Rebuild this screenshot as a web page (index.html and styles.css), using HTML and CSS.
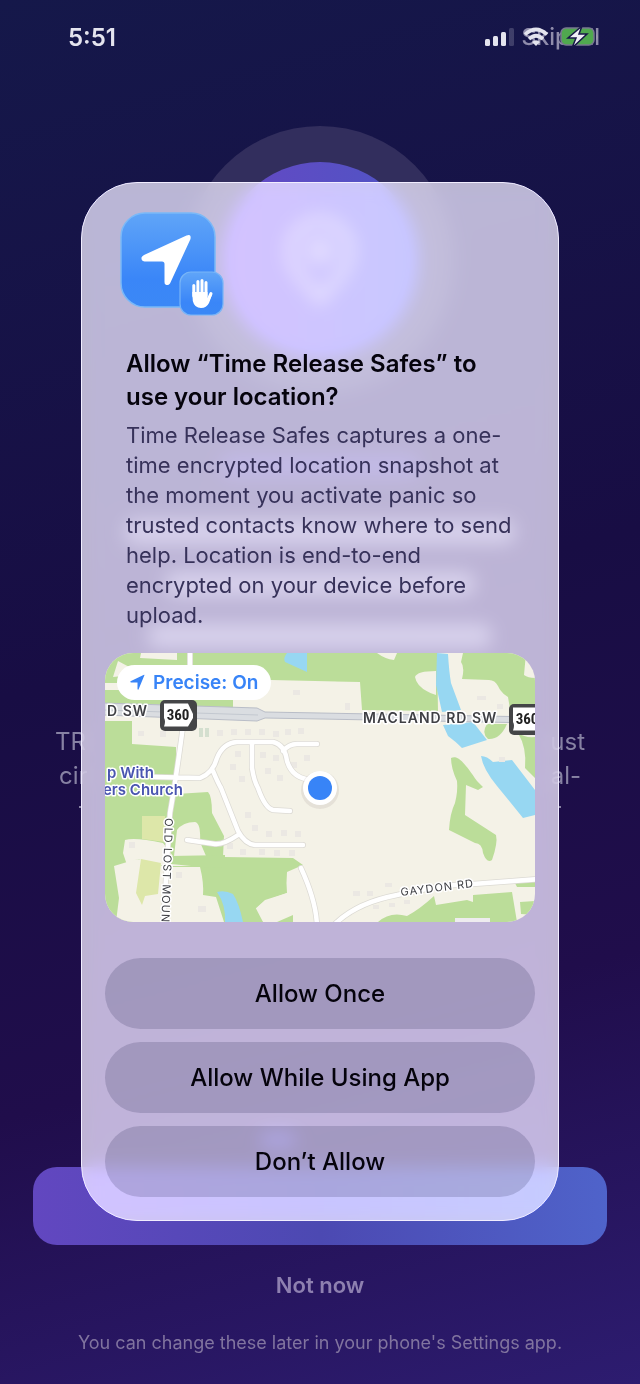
FILE: index.html
```html
<!DOCTYPE html>
<html lang="en">
<head>
<meta charset="utf-8">
<meta name="viewport" content="width=device-width, initial-scale=1">
<title>Location permission</title>
<link rel="stylesheet" href="styles.css">
</head>
<body>
<div class="screen">
  <header class="topbar">
    <time class="clock">5:51</time>
    <button class="skip" type="button">Skip all</button>
    <svg class="status" width="116" height="24" viewBox="0 0 116 24" aria-hidden="true">
      <g fill="#e4e4ee">
        <rect x="1" y="14" width="5" height="7" rx="1.5"/>
        <rect x="9" y="11" width="5" height="10" rx="1.5"/>
        <rect x="17" y="7" width="5" height="14" rx="1.5"/>
        <rect x="25" y="3" width="5" height="18" rx="1.5" opacity=".2"/>
      </g>
      <g fill="none" stroke="#e4e4ee" stroke-width="3.6">
        <path d="M41 9.5Q52 -.5 63 9.5"/>
        <path d="M45 14Q52 7.5 59 14"/>
      </g>
      <path d="M48 17Q52 13.5 56 17L52 21Z" fill="#e4e4ee"/>
      <rect x="77" y="3" width="33" height="17" rx="5" fill="#50a84f" stroke="#77788f" stroke-width="1.5"/>
      <path d="M112 9q4 3 0 6z" fill="#9998ac"/>
      <path d="M98 1L84 13h8l-4 10 15-14h-8z" fill="#efeff5" stroke="#171748" stroke-width="1.5"/>
    </svg>
  </header>
  <main class="page">
    <div class="halo">
      <div class="orb">
        <svg width="76" height="90" viewBox="0 0 80 96" fill="none" stroke="#fff" stroke-opacity=".6" stroke-width="9" aria-hidden="true">
          <path d="M40 90C28 74 8 60 8 38a32 32 0 0 1 64 0C72 60 52 74 40 90Z"/>
          <circle cx="40" cy="38" r="10"/>
        </svg>
      </div>
    </div>
    <div class="glow" aria-hidden="true"></div>
    <div class="headline" aria-hidden="true"><i></i><i></i><i></i></div>
    <div class="summary">
      <p class="line"><span>TR</span><span>ust</span></p>
      <p class="line line-inset"><span>cir</span><span>al-</span></p>
      <p class="ticks" aria-hidden="true"><i></i><i></i></p>
    </div>
    <div class="dots" aria-hidden="true"><i></i></div>
    <button class="cta" type="button" aria-label="Continue"></button>
    <button class="later" type="button">Not now</button>
    <p class="note">You can change these later in your phone's Settings app.</p>
  </main>

  <section class="dialog" role="dialog" aria-labelledby="dialog-title">
    <svg class="app-icon" width="104" height="104" viewBox="0 0 104 104" aria-hidden="true">
      <defs>
        <linearGradient id="blue" x1="0" y1="0" x2="0" y2="1">
          <stop offset="0" stop-color="#60a5f8"/><stop offset=".7" stop-color="#3a86f8"/><stop offset="1" stop-color="#3b88f6"/>
        </linearGradient>
      </defs>
      <rect x="1" y="1" width="94" height="94" rx="24" fill="url(#blue)" stroke="#7ab9f8" stroke-width="1.5"/>
      <path d="M66.500 23.500Q71.500 21.500 70.500 27L50 71.500Q48 74 45.500 72.500Q44.500 72 44.500 70V52Q44.500 49.500 42 49.500H24.500Q21 49 21.500 45.500Q21.500 44.500 24 43Z" fill="#fff"/>
      <rect x="60" y="60" width="43" height="43" rx="11" fill="url(#blue)" stroke="#78b5f7" stroke-width="1.200"/>
      <g stroke="#fff" stroke-linecap="round" fill="none">
        <path d="M73.800 84V73.500M77.900 82V69.500M82 82V68.500M86 84V70.500" stroke-width="3"/>
        <path d="M88 88L91 81.500" stroke-width="3"/>
      </g>
      <path d="M72.300 80H87.500V86L92.300 82L89 91Q86.500 96 81 96Q74.500 96 72.800 89Z" fill="#fff"/>
    </svg>

    <div class="copy">
      <h1 id="dialog-title">Allow “Time Release Safes” to<br>use your location?</h1>
      <p>Time Release Safes captures a one-<br>time encrypted location snapshot at<br>the moment you activate panic so<br>trusted contacts know where to send<br>help. Location is end-to-end<br>encrypted on your device before<br>upload.</p>
    </div>

    <div class="map">
      <svg class="map-art" viewBox="0 0 430 269" preserveAspectRatio="xMidYMid slice" role="img" aria-label="Map of current location">
        <defs>
          <path id="streets" d="M85 -5V20M80 58Q72 120 65 160L58 275M50 124L95 125Q108 120 112 105Q118 90 132 89L168 89Q180 92 182 108Q188 128 212 127M178 98Q184 91 192 91H212M147 90V115Q149 128 153 135Q160 155 168 157L185 158M108 118Q113 130 116 135L133 178Q140 191 150 192H198M133 182Q118 192 110 191L82 187M196 215Q212 250 212 275M228 273Q250 250 292 242Q340 231 368 231L435 226"/>
        </defs>
        <rect width="430" height="269" fill="#f4f2e7"/>
        <g fill="#bbdd99">
          <path d="M0 0H332L333 58L257 57L255 29L166 27L128 46V56H0Z"/>
          <path d="M358 0H421L419 22Q423 25 430 25V66L406 62L403 44Q396 40 393 33Q390 27 384 27L357 26Q360 14 356 9Z"/>
          <path d="M382 71H402Q395 87 383 86Q376 80 382 71Z"/>
          <path d="M413 80Q420 85 430 84V125L420 115Q422 95 413 80Z"/>
          <path d="M0 68H27V91L71 94V141L103 139Q107 143 107 160L119 183L118 204L188 205L198 212L182 219Q181 230 182 240L160 248L148 258L158 269H0Z"/>
          <path d="M346 105C352 102 358 107 372 128L378 134L373 137L361 132L360 162L391 182Q393 190 387 207Q382 211 378 200Q377 190 370 190L344 177Q345 160 350 150Q353 138 352 128Q346 115 346 105Z"/>
          <path d="M273 269Q285 258 302 263Q315 256 329 243L331 252L362 247L368 249V242L407 239L412 269Z"/>
          <path d="M410 230L430 228V234L412 234ZM415 249L430 248V262L416 261Z"/>
        </g>
        <g fill="#f4f2e7">
          <path d="M36 0H72V7L35 5ZM13 8L28 16V22L8 24ZM0 30H20V37H0ZM310 24Q312 18 331 18V42Q312 36 310 24ZM272 0H292L289 7Q280 6 272 0Z"/>
          <path d="M72 177Q78 169 90 169Q96 170 95 189L101 203L69 203Z"/>
          <path d="M20 187Q30 184 58 190L68 203L100 203L99 213H60L32 206L22 212L18 200Z"/>
          <path d="M9 213L32 206L62 214H95Q99 230 98 242L111 244L119 269H11L14 245Z"/>
          <path d="M182 220V240L160 247L148 258L158 269H210L196 216Z"/>
        </g>
        <path d="M66 203L120 202V215L96 214L66 211Z" fill="#bbdd99"/>
        <g fill="#dde7a9">
          <path d="M37 163H60V189L37 186Z"/>
          <path d="M36 206L56 210L53 241L40 243L37 252L31 240Z"/>
        </g>
        <path d="M120 269L145 244L158 269ZM172 269L188 262V269Z" fill="#bbdd99"/>
        <path d="M350 265H385V269H350Z" fill="#eeecef"/>
        <g fill="#97d7f2">
          <path d="M182 0H202V19L180 9Q178 5 182 0Z"/>
          <path d="M332 0L343 1Q344 18 346 30L356 57L337 59L331 32Z"/>
          <path d="M338 72L368 69L382 87L357 95Q350 88 343 83Z"/>
          <path d="M376 103Q382 103 388 109L407 107L430 137V162L418 165Q406 150 392 133Q378 116 376 103Z"/>
          <path d="M112 239Q120 237 128 241Q134 250 138 269H120Q121 252 112 239Z"/>
        </g>
        <g fill="#ebe8e3">
          <path d="M33 78h6v5h-6zM55 78h6v6h-6zM112 77h6v6h-6zM126 76h6v6h-6zM140 76h6v6h-6zM154 76h6v6h-6zM168 78h6v6h-6zM180 76h6v6h-6zM193 75h6v6h-6zM130 98h6v6h-6zM125 111h6v6h-6zM134 123h6v6h-6zM155 99h6v6h-6zM168 102h6v6h-6zM160 115h6v6h-6zM172 122h6v6h-6zM186 109h6v6h-6zM199 102h6v6h-6zM140 159h6v6h-6zM147 172h6v6h-6zM161 178h6v6h-6zM176 177h6v6h-6zM190 178h6v6h-6zM122 190h6v6h-6zM135 196h6v6h-6zM154 196h6v6h-6zM169 197h6v6h-6zM184 197h6v6h-6zM24 189h6v6h-6zM71 219h6v6h-6zM93 253h8v6h-8zM188 37h7v5h-7zM240 50h5v7h-5zM372 43h9v4h-9zM392 51h6v5h-6zM394 104h6v5h-6zM248 238h7v5h-7zM262 238h6v5h-6zM280 230h7v4h-7zM268 252h6v4h-6zM284 250h6v4h-6zM299 247h6v4h-6z"/>
        </g>
        <path d="M94 75h4v9h-4zM100 75h4v9h-4z" fill="#d4dfcf"/>
        <g fill="none" stroke-linecap="round" stroke-linejoin="round">
          <use href="#streets" stroke="#dcdad4" stroke-width="6"/>
          <use href="#streets" stroke="#fff" stroke-width="4.5"/>
        </g>
        <g stroke="#b9bdc7" stroke-width="1" fill="#dadde1">
          <path d="M-2 50L152 55L160 59L432 64V70L160 65L152 68L-2 62Z"/>
          <path d="M-2 57L153 62" fill="none" stroke="#c3c8d0"/>
        </g>
        <g class="map-label">
          <text class="road" x="2" y="63">D SW</text>
          <text class="road" x="258" y="70">MACLAND RD SW</text>
          <text class="place" x="2" y="125">p With</text>
          <text class="place" x="-2" y="142">ers Church</text>
          <text class="street" transform="translate(60 165) rotate(92)">OLD LOST MOUN</text>
          <text class="street" transform="translate(296 243) rotate(-7)">GAYDON RD</text>
        </g>
        <rect x="55" y="47" width="37" height="31" rx="5" fill="#444547"/>
        <path d="M59 50.500H83L88 61V65L83 73.500H59Q61 68 59 65Z" fill="#fff"/>
        <text class="shield" x="73" y="67">360</text>
        <rect x="404" y="51" width="37" height="31" rx="5" fill="#444547"/>
        <path d="M408 54.500H440V77.500H408Q410 72 408 69Z" fill="#fff"/>
        <text class="shield" x="422" y="71">360</text>
        <circle cx="215" cy="137" r="19" fill="#796f68" opacity=".12"/>
        <circle cx="215" cy="135" r="17" fill="#fff"/>
        <circle cx="215" cy="135" r="12" fill="#3884f7"/>
      </svg>
      <button class="precise" type="button">
        <svg width="17" height="17" viewBox="0 0 17 17" aria-hidden="true"><path d="M15.500 1L9.500 15.500Q8.800 16 8.500 15V8.500H2Q.8 8 1.500 7.300L14.500 1Q15.500 .5 15.500 1Z" fill="#3884f7"/></svg>
        Precise: On
      </button>
    </div>

    <div class="actions">
      <button type="button">Allow Once</button>
      <button type="button">Allow While Using App</button>
      <button type="button">Don’t Allow</button>
    </div>
  </section>
</div>
</body>
</html>
```
FILE: styles.css
```css
* { box-sizing: border-box; }
body {
  margin: 0;
  font-family: Inter, "Liberation Sans", sans-serif;
}
h1, p { margin: 0; }
button {
  border: 0;
  padding: 0;
  background: none;
  font: inherit;
  color: inherit;
}
.screen {
  position: relative;
  display: flex;
  flex-direction: column;
  min-height: 100vh;
  overflow: hidden;
  background: linear-gradient(165deg, #15184a 0%, #180d44 45%, #200d4b 72%, #2d1c70 100%);
}

/* Top bar */
.topbar {
  position: relative;
  display: flex;
  justify-content: space-between;
  align-items: center;
  height: 74px;
  padding: 0 40px 0 68px;
}
.clock { font-size: 24px; font-weight: 600; color: #e4e4ee; }
.skip { font-size: 23px; font-weight: 500; color: #8f8cab; }
.status { position: absolute; right: 40px; top: 25px; }

/* Page under the dialog */
.page {
  flex: 1;
  display: flex;
  flex-direction: column;
  align-items: center;
  padding: 52px 33px 28px;
}
.halo, .orb {
  display: grid;
  place-items: center;
  border-radius: 50%;
}
.halo { width: 268px; height: 268px; background: #322e5d; }
.orb { width: 196px; height: 196px; background: linear-gradient(90deg, #6548c4, #4f55c4); }
.glow {
  width: 200px;
  height: 24px;
  margin-top: 60px;
  border-radius: 12px;
  background: #2e2370;
}
.headline {
  display: flex;
  flex-direction: column;
  align-items: center;
  gap: 28px;
  width: 100%;
  margin-top: 42px;
}
.headline i { width: 68%; height: 24px; border-radius: 10px; background: #7c769f; }
.headline i:nth-child(2) { width: 54%; }
.headline i:nth-child(3) { width: 60%; }
.summary {
  align-self: stretch;
  margin-top: 77px;
  padding: 0 22px;
  font-size: 24px;
  line-height: 34px;
  color: #8782a3;
}
.line { display: flex; justify-content: space-between; }
.line-inset { padding: 0 4px; }
.ticks { display: flex; justify-content: space-between; padding: 13px 24px 0; }
.ticks i { width: 3px; height: 2px; background: #8782a3; }
.dots {
  display: flex;
  width: 120px;
  margin-top: auto;
  margin-bottom: 20px;
}
.dots i { width: 36px; height: 14px; border-radius: 7px; background: #5d4fc8; }
.cta {
  align-self: stretch;
  height: 78px;
  border-radius: 24px;
  background: linear-gradient(90deg, #6247c0, #4c49b2 50%, #4f63ca);
}
.later {
  margin-top: 24px;
  font-size: 22px;
  line-height: 32px;
  font-weight: 600;
  color: #8e80b0;
}
.note {
  margin-top: 28px;
  font-size: 18px;
  line-height: 27px;
  color: #81749f;
}

/* Permission dialog */
.dialog {
  position: absolute;
  top: 182px;
  left: 81px;
  right: 81px;
  padding: 29px 23px 23px;
  border: 1px solid #f1edff;
  border-radius: 56px;
  background: rgba(251, 247, 255, .72);
  backdrop-filter: blur(9px) saturate(1.8);
}
.app-icon { display: block; margin-left: 15px; }
.copy { padding: 31px 21px 23px; }
.copy h1 {
  font-size: 24px;
  line-height: 33px;
  font-weight: 600;
  color: #05030c;
  white-space: nowrap;
}
.copy p {
  margin-top: 7px;
  font-size: 22px;
  line-height: 30px;
  color: #37325a;
  white-space: nowrap;
}
.map {
  position: relative;
  overflow: hidden;
  border-radius: 28px;
}
.map-art { display: block; width: 100%; }
.map-label text {
  paint-order: stroke;
  stroke: #fff;
  stroke-width: 3px;
  stroke-linejoin: round;
  fill: #3f4045;
}
.map-label .road { font-size: 14px; font-weight: 600; letter-spacing: 1px; }
.map-label .place { font-size: 15px; font-weight: 600; fill: #4955b0; }
.map-label .street { font-size: 11px; letter-spacing: 1px; }
.shield {
  font: 700 15px "Liberation Sans Narrow", "Roboto Condensed", Roboto, sans-serif;
  text-anchor: middle;
  fill: #222;
}
.precise {
  position: absolute;
  top: 12px;
  left: 12px;
  display: flex;
  align-items: center;
  gap: 7px;
  height: 35px;
  padding: 0 13px 0 12px;
  border-radius: 18px;
  background: #fff;
  font-size: 19px;
  font-weight: 600;
  color: #3884f7;
}
.actions {
  display: flex;
  flex-direction: column;
  gap: 13px;
  margin-top: 36px;
}
.actions button {
  height: 71px;
  border-radius: 36px;
  background: rgba(20, 15, 60, .17);
  font-size: 24px;
  font-weight: 500;
  color: #05030c;
}
```
